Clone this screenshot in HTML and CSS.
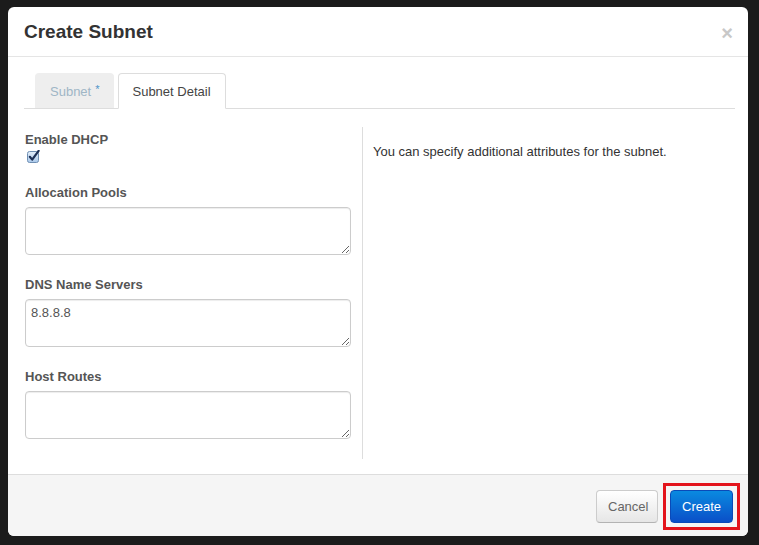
FILE: index.html
```html
<!DOCTYPE html>
<html>
<head>
<meta charset="utf-8">
<link rel="stylesheet" href="styles.css">
</head>
<body>
<div class="frame">
  <div class="modal">
    <div class="modal-header">
      <h3 class="title">Create Subnet</h3>
      <span class="close">&times;</span>
    </div>
    <div class="modal-body">
      <ul class="tabs">
        <li class="tab tab-inactive">Subnet <span class="req">*</span></li>
        <li class="tab tab-active">Subnet Detail</li>
      </ul>
      <div class="tab-content">
        <div class="left-col">
          <div class="group group-first">
            <label class="label">Enable DHCP</label>
            <span class="checkbox">
              <svg width="13" height="13" viewBox="0 0 13 13">
                <defs>
                  <linearGradient id="cb" x1="0" y1="0" x2="0" y2="1">
                    <stop offset="0" stop-color="#e3eefa"/>
                    <stop offset="1" stop-color="#a9c8ea"/>
                  </linearGradient>
                </defs>
                <rect x="0.5" y="1.5" width="11" height="11" rx="2" fill="url(#cb)" stroke="#6f8fb3"/>
                <path d="M2.8 6.8 L5.2 9.6 L11.6 0.8" fill="none" stroke="#1c2f55" stroke-width="2.2" stroke-linecap="round" stroke-linejoin="round"/>
              </svg>
            </span>
          </div>
          <div class="group">
            <label class="label">Allocation Pools</label>
            <textarea class="field"></textarea>
          </div>
          <div class="group">
            <label class="label">DNS Name Servers</label>
            <textarea class="field">8.8.8.8</textarea>
          </div>
          <div class="group">
            <label class="label">Host Routes</label>
            <textarea class="field"></textarea>
          </div>
        </div>
        <div class="right-col">
          <p class="help">You can specify additional attributes for the subnet.</p>
        </div>
      </div>
    </div>
    <div class="modal-footer">
      <button class="btn btn-cancel">Cancel</button>
      <span class="highlight"><button class="btn btn-primary">Create</button></span>
    </div>
  </div>
</div>
</body>
</html>
```

FILE: styles.css
```css
* { box-sizing: border-box; }
html, body {
  margin: 0;
  padding: 0;
  background: #1b1b1b;
  font-family: "Liberation Sans", Arial, Helvetica, sans-serif;
}
.frame {
  width: 759px;
  height: 545px;
  padding: 7px 11px 9px 8px;
}
.modal {
  width: 740px;
  height: 529px;
  background: #fff;
  border-radius: 6px;
  display: flex;
  flex-direction: column;
  overflow: hidden;
}
.modal-header {
  height: 50px;
  flex: none;
  border-bottom: 1px solid #e5e5e5;
  display: flex;
  align-items: center;
  justify-content: space-between;
  padding: 0 15px 0 16px;
}
.title {
  margin: 0;
  font-size: 19px;
  font-weight: bold;
  color: #333;
}
.close {
  font-size: 20px;
  font-weight: bold;
  color: #c8c8c8;
  line-height: 1;
  margin-top: 2px;
}
.modal-body {
  flex: 1;
  padding: 16px 13px 0 16px;
  display: flex;
  flex-direction: column;
}
.tabs {
  list-style: none;
  margin: 0;
  padding: 0 0 0 11px;
  display: flex;
  gap: 4px;
  border-bottom: 1px solid #ddd;
  height: 36px;
}
.tab {
  height: 36px;
  padding: 0 14px;
  display: flex;
  align-items: center;
  font-size: 13px;
  border-radius: 4px 4px 0 0;
}
.tab-inactive {
  background: #eee;
  color: #9fb6c6;
  border: 1px solid #eee;
  border-bottom: none;
  height: 35px;
}
.req {
  color: #4f93c9;
  font-size: 11px;
  margin-left: 4px;
  position: relative;
  top: -2px;
}
.tab-active {
  background: #fff;
  color: #444;
  border: 1px solid #ddd;
  border-bottom-color: #fff;
  padding: 0 14px 0 13px;
}
.tab-content {
  display: flex;
  margin-top: 18px;
  height: 332px;
}
.left-col {
  width: 338px;
  padding: 4px 11px 0 1px;
}
.right-col {
  flex: 1;
  border-left: 1px solid #ddd;
  padding: 16px 0 0 10px;
}
.help {
  margin: 0;
  font-size: 13px;
  line-height: 18px;
  color: #333;
}
.group { margin-top: 21px; }
.group-first { margin-top: 0; }
.label {
  display: block;
  font-size: 13px;
  font-weight: bold;
  line-height: 18px;
  color: #555;
  margin-bottom: 5px;
}
.group-first .label { margin-bottom: 1px; }
.checkbox {
  display: block;
  height: 13px;
  margin-left: 2px;
}
.checkbox svg { display: block; }
.field {
  display: block;
  width: 326px;
  height: 48px;
  margin: 0;
  border: 1px solid #ccc;
  border-radius: 4px;
  box-shadow: inset 0 1px 1px rgba(0,0,0,0.075);
  padding: 4px 5px;
  font-family: "Liberation Sans", Arial, sans-serif;
  font-size: 13px;
  line-height: 18px;
  color: #555;
  resize: vertical;
}
.modal-footer {
  flex: none;
  height: 62px;
  background: #f5f5f5;
  border-top: 1px solid #ddd;
  display: flex;
  justify-content: flex-end;
  align-items: flex-start;
  padding: 8px 8px 0 0;
}
.btn {
  height: 33px;
  border-radius: 4px;
  font-family: "Liberation Sans", Arial, sans-serif;
  font-size: 13px;
  padding: 0 11px;
}
.btn-cancel {
  width: 62px;
  margin-top: 7px;
  margin-right: 5px;
  color: #666;
  background: linear-gradient(#ffffff, #e6e6e6);
  border: 1px solid #ccc;
  border-bottom-color: #b3b3b3;
}
.highlight {
  display: block;
  border: 3px solid #e3141c;
  padding: 4px;
}
.btn-primary {
  display: block;
  width: 63px;
  color: #fff;
  background: linear-gradient(#0a8ae0, #0a4fc8);
  border: 1px solid #0a4ab8;
}
```
